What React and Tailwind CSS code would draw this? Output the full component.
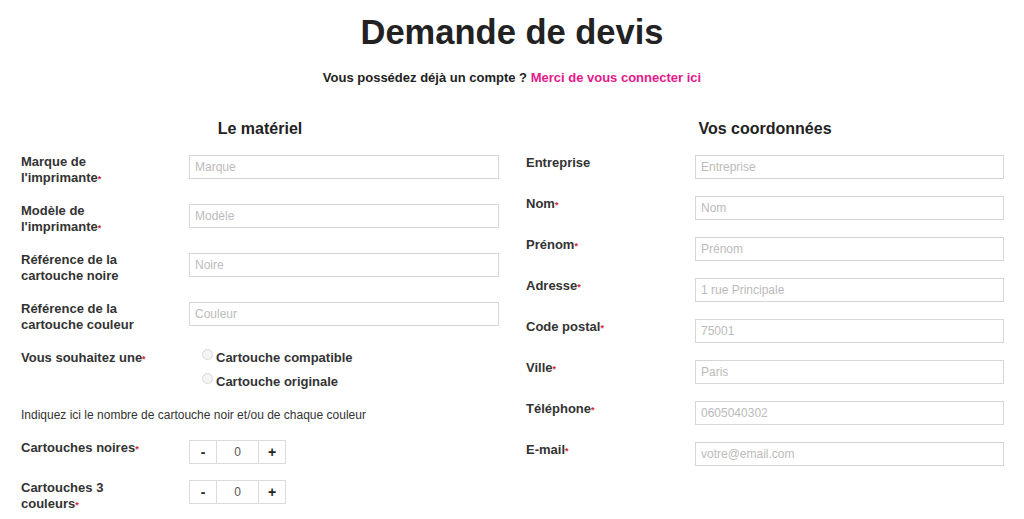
import React from "react";

const Req = () => <span className="text-[#d9262c] text-[9px] align-top relative top-[1px]">*</span>;

const LeftField = ({ label, req, placeholder }) => (
    <div className="grid grid-cols-[168px_1fr] mb-[17px]">
        <div className="text-[13px] leading-[16px] font-bold text-[#333] pr-4">
            {label}{req && <Req />}
        </div>
        <input
            placeholder={placeholder}
            className="mt-px h-6 w-full border border-[#d6d6d6] px-[5px] text-[12px] text-[#333] placeholder:text-[#bbb] outline-none"
        />
    </div>
);

const RightField = ({ label, req, placeholder }) => (
    <div className="grid grid-cols-[169px_1fr] mb-[16px]">
        <div className="pt-px text-[13px] leading-[16px] font-bold text-[#333]">
            {label}{req && <Req />}
        </div>
        <input
            placeholder={placeholder}
            className="mt-px h-6 w-full border border-[#d6d6d6] px-[5px] text-[12px] text-[#333] placeholder:text-[#bbb] outline-none"
        />
    </div>
);

const Radio = ({ label }) => (
    <div className="flex items-start pl-[13px] text-[13px] leading-[16px] font-bold text-[#333]">
        <span className="mt-[-1px] mr-[3px] inline-block h-[11px] w-[11px] rounded-full border border-[#d8d8d8] bg-[#f4f4f4]" />
        {label}
    </div>
);

const Stepper = () => (
    <div className="flex h-6 w-fit border border-[#dcdcdc] text-[#222]">
        <div className="flex w-[26px] items-center justify-center text-[14px] font-bold">-</div>
        <div className="flex w-[43px] items-center justify-center border-x border-[#dcdcdc] text-[12px] text-[#555]">0</div>
        <div className="flex w-[26px] items-center justify-center text-[14px] font-bold">+</div>
    </div>
);

const App = () => {
    return (
        <main className="min-h-[519px] bg-white pt-[12px] font-['Liberation_Sans',Arial,sans-serif] text-[#333]">
            <h1 className="text-center text-[34.5px] leading-[40px] font-bold text-[#222]">Demande de devis</h1>
            <p className="mt-[18px] text-center text-[13px] leading-[16px] font-bold text-[#222]">
                Vous possédez déjà un compte ? <a className="text-[#e5198b]" href="#">Merci de vous connecter ici</a>
            </p>

            <div className="mt-[33px] grid grid-cols-2 gap-[27px] pl-[21px] pr-[20px]">
                <section>
                    <h2 className="mb-[15px] text-center text-[16px] leading-[20px] font-bold text-[#222]">Le matériel</h2>
                    <LeftField label={<>Marque de<br />l'imprimante</>} req placeholder="Marque" />
                    <LeftField label={<>Modèle de<br />l'imprimante</>} req placeholder="Modèle" />
                    <LeftField label={<>Référence de la<br />cartouche noire</>} placeholder="Noire" />
                    <LeftField label={<>Référence de la<br />cartouche couleur</>} placeholder="Couleur" />

                    <div className="grid grid-cols-[168px_1fr] mb-[17px]">
                        <div className="text-[13px] leading-[16px] font-bold">Vous souhaitez une<Req /></div>
                        <div className="flex flex-col gap-2">
                            <Radio label="Cartouche compatible" />
                            <Radio label="Cartouche originale" />
                        </div>
                    </div>

                    <p className="mb-[17px] text-[12px] leading-[16px] text-[#333]">
                        Indiquez ici le nombre de cartouche noir et/ou de chaque couleur
                    </p>

                    <div className="grid grid-cols-[168px_1fr] mb-[16px]">
                        <div className="text-[13px] leading-[16px] font-bold">Cartouches noires<Req /></div>
                        <Stepper />
                    </div>
                    <div className="grid grid-cols-[168px_1fr]">
                        <div className="text-[13px] leading-[16px] font-bold">Cartouches 3<br />couleurs<Req /></div>
                        <Stepper />
                    </div>
                </section>

                <section>
                    <h2 className="mb-[15px] text-center text-[16px] leading-[20px] font-bold text-[#222]">Vos coordonnées</h2>
                    <RightField label="Entreprise" placeholder="Entreprise" />
                    <RightField label="Nom" req placeholder="Nom" />
                    <RightField label="Prénom" req placeholder="Prénom" />
                    <RightField label="Adresse" req placeholder="1 rue Principale" />
                    <RightField label="Code postal" req placeholder="75001" />
                    <RightField label="Ville" req placeholder="Paris" />
                    <RightField label="Téléphone" req placeholder="0605040302" />
                    <RightField label="E-mail" req placeholder="votre@email.com" />
                </section>
            </div>
        </main>
    );
};

export default App;
